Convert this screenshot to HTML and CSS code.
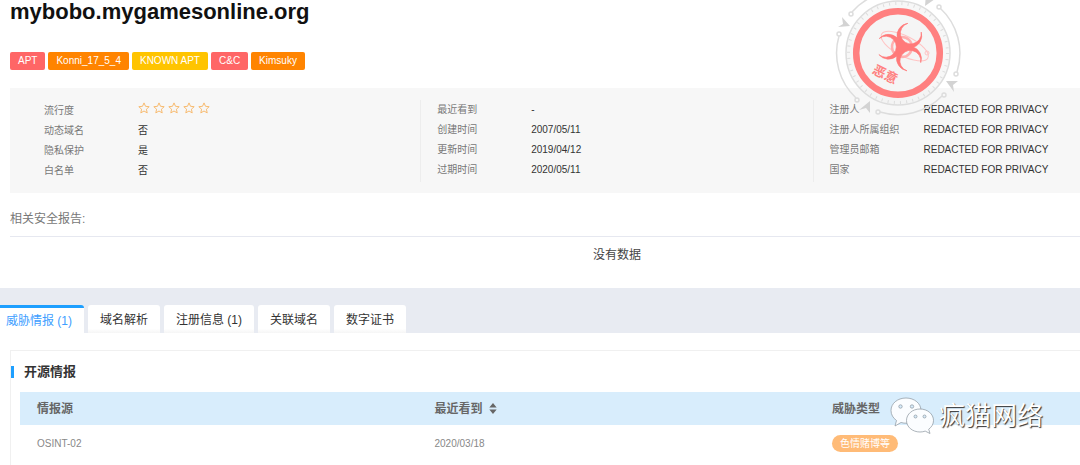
FILE: index.html
```html
<!DOCTYPE html>
<html lang="zh-CN">
<head>
    <meta charset="UTF-8">
    <meta name="viewport" content="width=device-width, initial-scale=1.0">
    <title>mybobo.mygamesonline.org</title>
    <link rel="stylesheet" href="styles.css">
</head>
<body>
    <header class="summary">
        <h1 class="domain">mybobo.mygamesonline.org</h1>
        <div class="tags">
            <span class="tag red">APT</span>
            <span class="tag orange">Konni_17_5_4</span>
            <span class="tag yellow">KNOWN APT</span>
            <span class="tag red">C&amp;C</span>
            <span class="tag orange">Kimsuky</span>
        </div>

        <div class="info">
            <dl class="info-col">
                <div class="info-row rating">
                    <dt>流行度</dt>
                    <dd class="stars">
                        <svg viewBox="0 0 12 12"><use href="#star"/></svg>
                        <svg viewBox="0 0 12 12"><use href="#star"/></svg>
                        <svg viewBox="0 0 12 12"><use href="#star"/></svg>
                        <svg viewBox="0 0 12 12"><use href="#star"/></svg>
                        <svg viewBox="0 0 12 12"><use href="#star"/></svg>
                    </dd>
                </div>
                <div class="info-row"><dt>动态域名</dt><dd>否</dd></div>
                <div class="info-row"><dt>隐私保护</dt><dd>是</dd></div>
                <div class="info-row"><dt>白名单</dt><dd>否</dd></div>
            </dl>
            <dl class="info-col">
                <div class="info-row"><dt>最近看到</dt><dd>-</dd></div>
                <div class="info-row"><dt>创建时间</dt><dd>2007/05/11</dd></div>
                <div class="info-row"><dt>更新时间</dt><dd>2019/04/12</dd></div>
                <div class="info-row"><dt>过期时间</dt><dd>2020/05/11</dd></div>
            </dl>
            <dl class="info-col">
                <div class="info-row"><dt>注册人</dt><dd>REDACTED FOR PRIVACY</dd></div>
                <div class="info-row"><dt>注册人所属组织</dt><dd>REDACTED FOR PRIVACY</dd></div>
                <div class="info-row"><dt>管理员邮箱</dt><dd>REDACTED FOR PRIVACY</dd></div>
                <div class="info-row"><dt>国家</dt><dd>REDACTED FOR PRIVACY</dd></div>
            </dl>
        </div>

        <!-- verdict stamp -->
        <svg class="stamp" viewBox="-64 -64 128 128">
            <circle r="52" class="disc"/>
            <g class="grey">
                <circle r="52"/>
                <circle r="49.500" class="ticks"/>
                <path d="M-59-17A61.500 61.500 0 0 0-42 45"/>
                <path d="M-18 59A61.500 61.500 0 0 0 44 43"/>
                <path d="M59 19A61.500 61.500 0 0 0 42-45"/>
                <path d="M-46-41A61.500 61.500 0 0 1 16-60"/>
                <circle cx="-59" cy="-19" r="2"/>
                <circle cx="-41" cy="47" r="2"/>
                <circle cx="-20" cy="59" r="2"/>
                <circle cx="46" cy="42" r="2"/>
                <circle cx="58" cy="21" r="2"/>
                <circle cx="41" cy="-46" r="2"/>
                <circle cx="-47" cy="-39" r="2"/>
            </g>
            <g class="arrows">
                <path d="M-48-27l-8-9 1 7-5 3z"/>
                <path d="M27-47l10-7-7 0-2-5z"/>
                <path d="M48 28l12 0-5 4 1 7z"/>
                <path d="M-28 48l0 12-4-5-7 2z"/>
            </g>
            <circle r="41.800" class="ring"/>
            <g transform="translate(4 -6)">
                <ellipse class="orbit" cx="2" cy="-2" rx="26" ry="10" transform="rotate(27)"/>
                <circle class="orbit" cx="25" cy="6" r="2"/>
                <circle class="inner-ring" r="10"/>
                <g class="hazard">
                    <path d="M23-8A12.400 12.400 0 1 0 23 8A10.500 10.500 0 1 1 23-8z" transform="rotate(-57)"/>
                    <path d="M23-8A12.400 12.400 0 1 0 23 8A10.500 10.500 0 1 1 23-8z" transform="rotate(59)"/>
                    <path d="M23-8A12.400 12.400 0 1 0 23 8A10.500 10.500 0 1 1 23-8z" transform="rotate(181)"/>
                    <circle r="5"/>
                </g>
            </g>
            <text class="verdict" x="-13" y="26" transform="rotate(27 -13 22)">恶意</text>
        </svg>

        <h2 class="report-title">相关安全报告:</h2>
        <p class="no-data">没有数据</p>
    </header>

    <nav class="tabs">
        <button class="tab active">威胁情报 (1)</button>
        <button class="tab">域名解析</button>
        <button class="tab">注册信息 (1)</button>
        <button class="tab">关联域名</button>
        <button class="tab">数字证书</button>
    </nav>

    <section class="panel">
        <h3 class="panel-title">开源情报</h3>
        <table class="intel">
            <thead>
                <tr>
                    <th>情报源</th>
                    <th>
                        <button class="sort">最近看到
                            <svg viewBox="0 0 8 12"><path d="M4 0l4 5H0zM4 12l4-5H0z"/></svg>
                        </button>
                    </th>
                    <th>威胁类型</th>
                </tr>
            </thead>
            <tbody>
                <tr>
                    <td>OSINT-02</td>
                    <td>2020/03/18</td>
                    <td><span class="badge">色情赌博等</span></td>
                </tr>
            </tbody>
        </table>
    </section>

    <div class="watermark">
        <svg viewBox="0 0 44 38">
            <path d="M16 1C7.500 1 1 6.500 1 13.500c0 4 2 7.500 5.500 10L5 29l6-3.500c2 .6 4 .8 6 .7C31 25 31 21 31 13.500 31 6.500 24.500 1 16 1z"/>
            <path d="M30 12c-7.500 0-13.500 5-13.500 11.500S22.500 35 30 35c2 0 3.600-.3 5.200-.9L40 36.500l-1.300-4.300c3-2.100 4.800-5.200 4.800-8.700C43.500 17 37.500 12 30 12z"/>
            <g class="eyes">
                <circle cx="10.500" cy="9.500" r="1.700"/>
                <circle cx="22" cy="9.500" r="1.700"/>
                <circle cx="25.500" cy="19.500" r="1.500"/>
                <circle cx="34.500" cy="19.500" r="1.500"/>
            </g>
        </svg>
        <span>疯猫网络</span>
    </div>

    <svg class="sprite">
        <symbol id="star" viewBox="0 0 12 12">
            <path d="M6 .9l1.500 3.400 3.700.4-2.800 2.500.8 3.700L6 9l-3.200 1.900.8-3.700L.8 4.700l3.700-.4z"/>
        </symbol>
    </svg>
</body>
</html>
```

FILE: styles.css
```css
body {
    margin: 0;
    font-family: "Liberation Sans", "Noto Sans CJK SC", sans-serif;
    font-size: 12px;
    line-height: 20px;
    color: #444;
    background: #fff;
}
h1, h2, h3, p, dl, dd {
    margin: 0;
}
button {
    font: inherit;
    color: inherit;
    border: none;
    cursor: pointer;
}
.sprite {
    display: none;
}
.summary {
    position: relative;
    padding: 0 0 23px 10px;
}
.domain {
    font-size: 22px;
    line-height: 24px;
    color: #111;
}
.tags {
    display: flex;
    gap: 3px;
    margin: 28px 0 18px;
}
.tag {
    padding: 0 8px;
    border-radius: 2px;
    font-size: 10px;
    line-height: 18px;
    color: #fff;
}
.red {
    background: #ff6666;
}
.orange {
    background: #ff8400;
}
.yellow {
    background: #ffc400;
}
.info {
    display: grid;
    grid-template-columns: 23fr 22fr 15fr;
    padding: 12px 0 11px;
    background: #f7f7f7;
    font-size: 10px;
}
.info-col {
    padding: 0 0 2px 16px;
    border-left: 1px solid #ededed;
    white-space: nowrap;
}
.info-col:first-child {
    padding: 0 0 0 34px;
    border-left: none;
}
.info-row {
    display: flex;
}
.info-row dt {
    width: 94px;
    color: #777;
}
.info-row dd {
    color: #333;
}
.rating {
    line-height: 21px;
}
.info-row .stars {
    display: flex;
    gap: 3px;
    padding-top: 2px;
}
.stars svg {
    width: 12px;
    height: 12px;
    fill: none;
    stroke: #f7bb70;
}
.stamp {
    position: absolute;
    top: -11px;
    right: 118px;
    width: 128px;
    height: 128px;
    fill: none;
}
.disc {
    fill: #f1f1f1;
    fill-opacity: 0.6;
}
.grey {
    stroke: #ddd;
    stroke-width: 1.5;
}
.grey .ticks {
    stroke-width: 3;
    stroke-dasharray: 1 5.220;
}
.arrows {
    fill: #d3d3d3;
}
.ring {
    fill: #f5f5f5;
    stroke: #ff8080;
    stroke-width: 6.5;
}
.orbit {
    stroke: #ffc4c4;
}
.inner-ring {
    stroke: #ffb0b0;
    stroke-width: 2.5;
}
.hazard {
    fill: #ff7a7a;
    stroke: #ff7a7a;
    stroke-width: 0.6;
}
.verdict {
    fill: #ff8080;
    font-size: 13px;
    font-weight: bold;
    text-anchor: middle;
}
.report-title {
    margin-top: 14px;
    padding-bottom: 5px;
    border-bottom: 1px solid #e6e8f0;
    font-size: 12px;
    font-weight: normal;
    line-height: 24px;
    color: #777;
}
.no-data {
    padding: 8px 0 0 144px;
    text-align: center;
}
.tabs {
    display: flex;
    gap: 4px;
    padding-top: 17px;
    background: #e8ebf2;
}
.tab {
    height: 28px;
    padding: 2px 12px 0;
    border-radius: 3px 3px 0 0;
    background: linear-gradient(#fff 85%, #f5f5f5);
    color: #333;
}
.tab.active {
    padding: 0 12px 0 6px;
    border-top: 3px solid #1e9fff;
    border-radius: 0 3px 0 0;
    background: #fff;
    color: #409eff;
}
.panel {
    margin: 17px 0 0 10px;
    padding: 11px 0 3px;
    border: 1px solid #f0f0f0;
    border-width: 1px 0 0 1px;
}
.panel-title {
    display: flex;
    align-items: center;
    gap: 10px;
    margin-bottom: 10px;
    font-size: 13px;
    color: #333;
}
.panel-title::before {
    content: "";
    width: 3px;
    height: 12px;
    background: #1e9fff;
}
.intel {
    width: calc(100% - 9px);
    margin-left: 9px;
    border-collapse: collapse;
    table-layout: fixed;
}
.intel th {
    box-sizing: border-box;
    width: 37.5%;
    height: 33px;
    padding: 0 0 0 17px;
    background: #d8edfc;
    text-align: left;
    color: #666;
}
.intel th:last-child {
    width: 25%;
}
.intel td {
    height: 37px;
    padding: 0 0 0 17px;
    font-size: 10px;
    color: #888;
}
.sort {
    display: flex;
    align-items: center;
    gap: 6px;
    padding: 0;
    background: none;
}
.sort svg {
    width: 8px;
    height: 11px;
    fill: #666;
}
.badge {
    display: inline-block;
    padding: 0 8px;
    border-radius: 9px;
    background: #ffbb77;
    line-height: 17px;
    color: #fff;
}
.watermark {
    position: absolute;
    top: 397px;
    right: 37px;
    display: flex;
    align-items: center;
    gap: 5px;
    font-size: 26px;
    line-height: 38px;
    color: #fff;
    text-shadow: 1px 1px 1px #333;
}
.watermark svg {
    width: 44px;
    height: 38px;
    fill: #fbfdff;
    stroke: #8a949c;
    stroke-width: 0.7;
}
.eyes {
    fill: #d8edfc;
}
```
